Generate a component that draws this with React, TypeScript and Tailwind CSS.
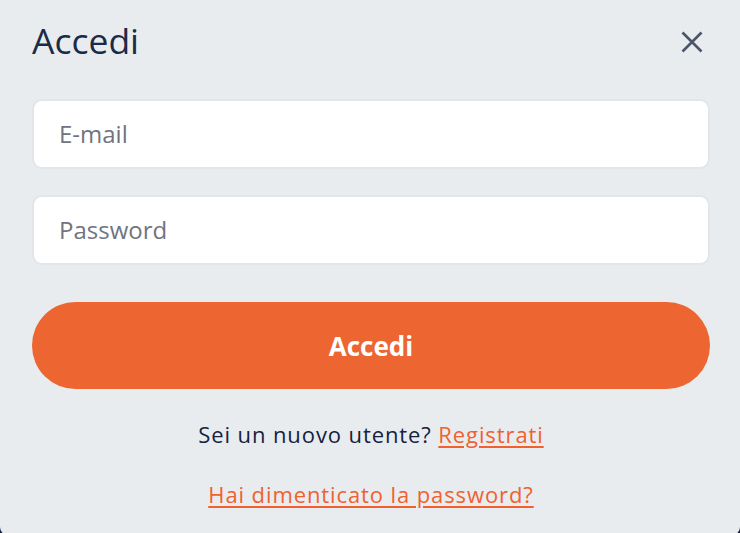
import React from "react";

export default function App() {
  const font = { fontFamily: '"Open Sans", "Noto Sans", sans-serif' };
  return (
    <div className="h-[533px] w-[740px] overflow-hidden bg-[#13233d]" style={font}>
      <div className="h-[535px] rounded-b-[8px] bg-[#e9ecef] pl-[32px] pr-[30px]">
        <div className="flex items-start justify-between pt-[20px]">
          <h1 className="text-[35.5px] leading-[40px] font-normal text-[#1a2b48]">Accedi</h1>
          <button className="mt-[10px] mr-[6px] flex h-[24px] w-[24px] items-center justify-center" aria-label="Chiudi">
            <svg width="22" height="22" viewBox="0 0 22 22" fill="none">
              <path d="M1.5 1.5L20.5 20.5M20.5 1.5L1.5 20.5" stroke="#4a5568" strokeWidth="2.6" />
            </svg>
          </button>
        </div>

        <div className="mt-[39px] flex h-[70px] items-center rounded-[10px] border-2 border-[#e2e5e9] bg-white pl-[25px]">
          <span className="text-[24px] leading-none text-[#707480]">E-mail</span>
        </div>
        <div className="mt-[26px] flex h-[70px] items-center rounded-[10px] border-2 border-[#e2e5e9] bg-white pl-[25px]">
          <span className="text-[24px] leading-none text-[#707480]">Password</span>
        </div>

        <button className="mt-[37px] flex h-[87px] w-full items-center justify-center rounded-full bg-[#ed6530]">
          <span className="text-[26px] font-bold leading-none text-white">Accedi</span>
        </button>

        <p className="mt-[30px] text-center text-[22px] leading-[30px] tracking-[0.9px] text-[#14233f]">
          Sei un nuovo utente?{" "}
          <a className="text-[#f0612d] underline underline-offset-[3px]">Registrati</a>
        </p>
        <p className="mt-[30px] text-center text-[22px] leading-[30px] tracking-[0.9px]">
          <a className="text-[#f0612d] underline underline-offset-[3px]">Hai dimenticato la password?</a>
        </p>
      </div>
    </div>
  );
}
